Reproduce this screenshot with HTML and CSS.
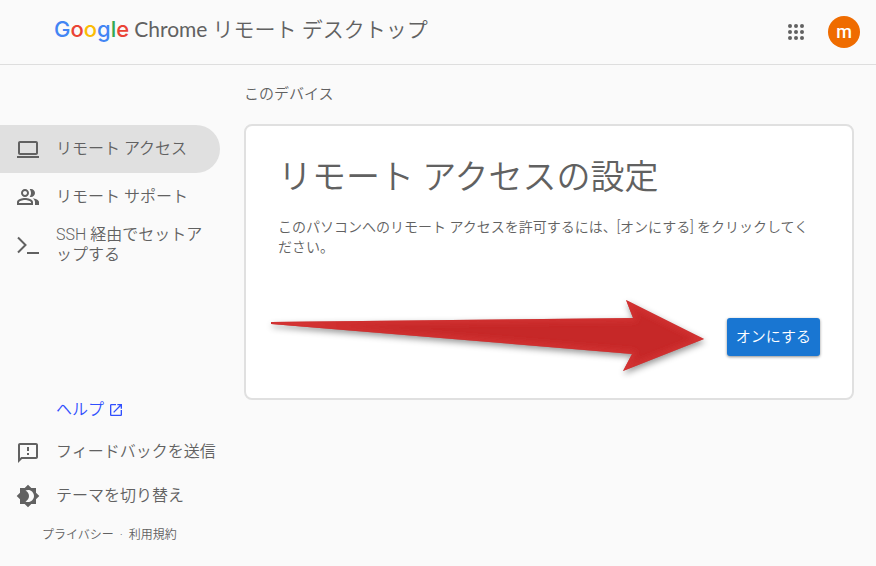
FILE: index.html
```html
<!DOCTYPE html>
<html lang="ja">
<head>
<meta charset="utf-8">
<meta name="viewport" content="width=device-width, initial-scale=1">
<title>Chrome リモート デスクトップ</title>
<link rel="stylesheet" href="styles.css">
</head>
<body>
<header class="topbar">
  <h1 class="brand"><span class="logo"><span class="blue">G</span><span class="red">o</span><span class="yellow">o</span><span class="blue">g</span><span class="green">l</span><span class="red">e</span></span><span class="product"><span class="latin">Chrome</span> リモート デスクトップ</span></h1>
  <button class="apps" type="button" aria-label="Google アプリ">
    <svg class="icon" viewBox="0 0 24 24"><circle cx="6" cy="6" r="2"/><circle cx="12" cy="6" r="2"/><circle cx="18" cy="6" r="2"/><circle cx="6" cy="12" r="2"/><circle cx="12" cy="12" r="2"/><circle cx="18" cy="12" r="2"/><circle cx="6" cy="18" r="2"/><circle cx="12" cy="18" r="2"/><circle cx="18" cy="18" r="2"/></svg>
  </button>
  <button class="avatar" type="button">m</button>
</header>
<div class="layout">
  <div class="sidebar">
    <nav class="menu">
      <a class="item active" href="#access" aria-current="page">
        <svg class="icon" viewBox="0 0 24 24"><path d="M20 18c1.100 0 1.990-.9 1.990-2L22 6c0-1.100-.9-2-2-2H4c-1.100 0-2 .9-2 2v10c0 1.100.9 2 2 2h16zM4 6h16v10H4V6zM1 19h22v2H1z"/></svg>
        <span>リモート アクセス</span>
      </a>
      <a class="item" href="#support">
        <svg class="icon" viewBox="0 0 24 24"><path d="M9 12c2.210 0 4-1.790 4-4s-1.790-4-4-4-4 1.790-4 4 1.790 4 4 4zm0-6c1.100 0 2 .9 2 2s-.9 2-2 2-2-.9-2-2 .9-2 2-2zM9 13c-2.670 0-8 1.340-8 4v3h16v-3c0-2.660-5.330-4-8-4zm6 5H3v-.99C3.200 16.290 6.300 15 9 15s5.800 1.290 6 2v1zM16.670 13.130C18.040 14.060 19 15.320 19 17v3h4v-3c0-2.180-3.570-3.470-6.330-3.870zM15 12c2.210 0 4-1.790 4-4s-1.790-4-4-4c-.47 0-.91.1-1.330.24C14.500 5.270 15 6.580 15 8s-.5 2.730-1.330 3.760c.42.14.86.24 1.330.24z"/></svg>
        <span>リモート サポート</span>
      </a>
      <a class="item" href="#ssh">
        <svg class="icon" viewBox="0 0 24 24"><path class="stroke" d="M2 4.500l7.500 7.500L2 19.500M11 20h12"/></svg>
        <span>SSH 経由でセットアップする</span>
      </a>
    </nav>
    <div class="tools">
      <a class="help" href="#help">ヘルプ
        <svg class="icon-small" viewBox="0 0 24 24"><path d="M19 19H5V5h7V3H5c-1.110 0-2 .9-2 2v14c0 1.100.89 2 2 2h14c1.100 0 2-.9 2-2v-7h-2v7zM14 3v2h3.590l-9.830 9.830 1.410 1.410L19 6.410V10h2V3h-7z"/></svg>
      </a>
      <button class="tool" type="button">
        <svg class="icon" viewBox="0 0 24 24"><path d="M20 3H4c-1.100 0-1.990.9-1.990 2L2 23l4-4h14c1.100 0 2-.9 2-2V5c0-1.100-.9-2-2-2zm0 14H5.170L4 18.170V5h16v12zM11 13h2v2h-2zm0-6h2v4h-2z"/></svg>
        <span>フィードバックを送信</span>
      </button>
      <button class="tool" type="button">
        <svg class="icon" viewBox="0 0 24 24"><path d="M20 8.690V4h-4.690L12 .69 8.690 4H4v4.690L.69 12 4 15.310V20h4.690L12 23.310 15.310 20H20v-4.690L23.310 12 20 8.690zM12 18c-.89 0-1.740-.2-2.500-.55C11.560 16.500 13 14.420 13 12s-1.440-4.500-3.500-5.450C10.260 6.200 11.110 6 12 6c3.310 0 6 2.690 6 6s-2.690 6-6 6z"/></svg>
        <span>テーマを切り替え</span>
      </button>
      <div class="legal"><a href="#privacy">プライバシー</a><span>·</span><a href="#terms">利用規約</a></div>
    </div>
  </div>
  <main class="content">
    <h2 class="section-title">このデバイス</h2>
    <section class="card">
      <h3 class="card-title">リモート アクセスの設定</h3>
      <p class="card-text">このパソコンへのリモート アクセスを許可するには、[オンにする] をクリックしてください。</p>
      <div class="actions"><button class="primary" type="button">オンにする</button></div>
      <svg class="arrow" viewBox="0 0 460 100" aria-hidden="true">
        <defs>
          <filter id="soft" x="-5%" y="-15%" width="110%" height="130%"><feGaussianBlur stdDeviation="3"/></filter>
          <clipPath id="shape"><path d="M11 32L373 28L366 10L444 49L363 81L372 64L11 34Z"/></clipPath>
        </defs>
        <path class="arrow-fill" d="M11 32L373 28L366 10L444 49L363 81L372 64L11 34Z"/>
        <g clip-path="url(#shape)"><path class="arrow-edge" filter="url(#soft)" d="M11 32L373 28L366 10L444 49L363 81L372 64L11 34Z"/></g>
      </svg>
    </section>
  </main>
</div>
</body>
</html>
```

FILE: styles.css
```css
* { box-sizing: border-box; }

body {
  margin: 0;
  min-height: 100vh;
  display: flex;
  flex-direction: column;
  background: #fafafa;
  color: #616161;
  font-family: Roboto, "Noto Sans CJK JP", sans-serif;
  font-weight: 350;
  font-size: 16px;
  line-height: 20px;
}

h1, h2, h3, p { margin: 0; font-weight: 350; }
a { color: inherit; text-decoration: none; }
button {
  padding: 0;
  border: 0;
  background: none;
  color: inherit;
  font: inherit;
  cursor: pointer;
}

.icon { width: 24px; height: 24px; flex: none; fill: #616161; display: block; }
.stroke { fill: none; stroke: #616161; stroke-width: 2; }

.topbar {
  display: flex;
  align-items: center;
  height: 65px;
  padding: 0 16px 0 54px;
  border-bottom: 1px solid #dedede;
}
.brand {
  display: flex;
  align-items: baseline;
  gap: 5px;
  flex: 1;
  font-size: 21px;
  line-height: 28px;
  padding-bottom: 6px;
}
.logo { font-family: Inter, sans-serif; font-size: 22px; font-weight: 500; }
.latin { font-family: Lato, sans-serif; font-weight: 400; }
.blue { color: #4285f4; }
.red { color: #ea4335; }
.yellow { color: #fbbc05; }
.green { color: #34a853; }
.apps { margin-right: 20px; }
.avatar {
  width: 32px;
  height: 32px;
  border-radius: 50%;
  background: #ef6c00;
  color: #fff;
  font-size: 18px;
  font-weight: 500;
}

.layout { display: flex; flex: 1; }
.sidebar {
  width: 220px;
  flex: none;
  display: flex;
  flex-direction: column;
  justify-content: space-between;
  padding: 60px 0 21px;
}
.item {
  display: flex;
  align-items: center;
  gap: 16px;
  min-height: 48px;
  padding: 0 12px 0 16px;
  border-radius: 0 24px 24px 0;
}
.active { background: #e0e0e0; }

.tools { display: flex; flex-direction: column; }
.help {
  display: flex;
  align-items: center;
  gap: 4px;
  padding-left: 56px;
  margin-bottom: 10px;
  color: #304ffe;
}
.icon-small { width: 16px; height: 16px; fill: #304ffe; }
.tool {
  display: flex;
  align-items: center;
  gap: 16px;
  height: 44px;
  padding-left: 16px;
  text-align: left;
  white-space: nowrap;
}
.legal {
  display: flex;
  gap: 6px;
  margin-top: 7px;
  padding-left: 42px;
  font-size: 12px;
}

.content { flex: 1; padding: 19px 22px 0 24px; }
.section-title { font-size: 15px; }
.card {
  position: relative;
  margin-top: 20px;
  padding: 29px 32px 42px;
  border: 2px solid #e0e0e0;
  border-radius: 8px;
  background: #fff;
}
.card-title { font-size: 34px; line-height: 44px; }
.card-text { margin-top: 18px; font-size: 14px; }
.actions { display: flex; justify-content: flex-end; margin-top: 61px; }
.primary {
  height: 38px;
  padding: 0 9px;
  border-radius: 3px;
  background: #1976d2;
  color: #fff;
  font-size: 15px;
  box-shadow: 0 1px 3px rgba(0, 0, 0, 0.45);
}
.arrow {
  position: absolute;
  right: 132px;
  bottom: 8px;
  width: 460px;
  height: 100px;
  filter: drop-shadow(1px 3px 3px rgba(0, 0, 0, 0.4));
  pointer-events: none;
}
.arrow-fill { fill: #c62828; }
.arrow-edge { fill: none; stroke: #d63636; stroke-width: 5; }
```
